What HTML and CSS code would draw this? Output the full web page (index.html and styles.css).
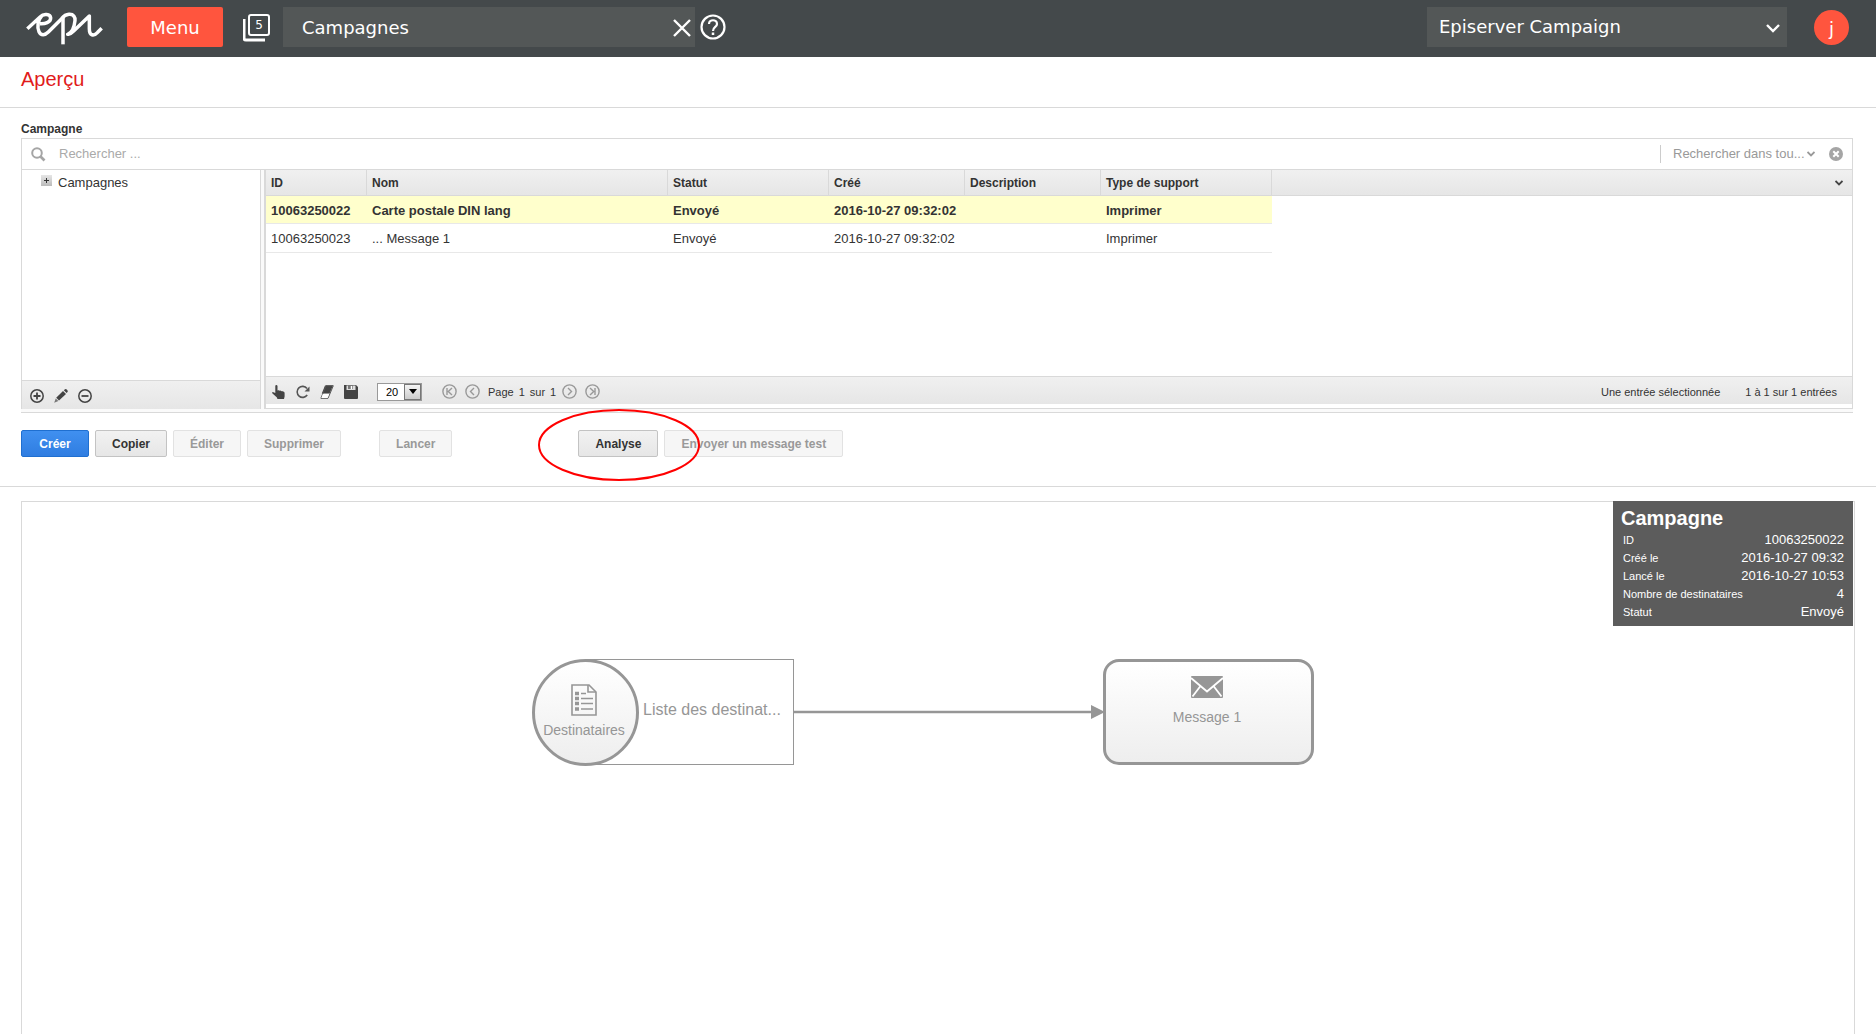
FILE: index.html
```html
<!DOCTYPE html>
<html lang="fr">
<head>
<meta charset="utf-8">
<meta name="viewport" content="width=device-width, initial-scale=1">
<title>Episerver Campaign – Campagnes</title>
<link rel="stylesheet" href="styles.css">
</head>
<body>
<header class="topbar">
  <a class="logo" href="#" aria-label="epi">
    <svg width="80" height="34" viewBox="0 0 240 102" fill="none" stroke="#fff" stroke-width="10.500" stroke-linejoin="round">
      <path d="M7 50L46 14C56 4 76 6 77 18C77 31 60 36 45 35M50 12C38 24 36 46 42 59C48 72 60 70 70 60L110 20C114 15 118 8 132 7C146 6 151 16 150 26C148 44 142 62 128 67H130C136 66 140 63 146 57L193 12V50C193 71 206 74 218 61L230 49"/>
      <path d="M114 97V18"/>
    </svg>
  </a>
  <button class="menu-btn" type="button">Menu</button>
  <button class="pages-btn" type="button" aria-label="Pages ouvertes">
    <svg width="28" height="28" viewBox="0 0 28 28" fill="none" stroke="#fff">
      <rect x="6" y="1" width="20" height="20" rx="2" stroke-width="2"/>
      <path d="M1 5V24Q1 26 3 26H22" stroke-width="3"/>
    </svg>
    <span class="pages-count">5</span>
  </button>
  <div class="tab">
    <span>Campagnes</span>
    <button class="tab-close" type="button" aria-label="Fermer">
      <svg width="18" height="18" viewBox="0 0 18 18" stroke="#fff" stroke-width="2.400"><path d="M1 1L17 17M17 1L1 17"/></svg>
    </button>
  </div>
  <button class="help" type="button" aria-label="Aide">
    <svg width="26" height="26" viewBox="0 0 26 26" fill="none" stroke="#fff"><circle cx="13" cy="13" r="11.500" stroke-width="2.200"/><path d="M9 10C9 5 17 5 17 10C17 13 13 13 13 17" stroke-width="2.200"/><path d="M13 18.500V21" stroke-width="2.500"/></svg>
  </button>
  <div class="product">
    <select aria-label="Produit"><option>Episerver Campaign</option></select>
    <svg width="14" height="9" viewBox="0 0 14 9" fill="none" stroke="#fff" stroke-width="2.400"><path d="M1 1L7 7L13 1"/></svg>
  </div>
  <button class="avatar" type="button" aria-label="Compte">j</button>
</header>

<h1 class="page-title">Aperçu</h1>

<main class="main">
  <section class="selector">
    <h2 class="selector-title">Campagne</h2>
    <div class="browser">
      <div class="search">
        <svg class="search-icon" width="15" height="15" viewBox="0 0 15 15" fill="none" stroke="#a5a5a5"><circle cx="6" cy="6" r="4.800" stroke-width="2"/><path d="M9.500 9.500L13.500 13.500" stroke-width="2.600"/></svg>
        <input type="text" aria-label="Rechercher" placeholder="Rechercher ...">
        <div class="scope">
          <select aria-label="Champ de recherche"><option>Rechercher dans tou...</option></select>
          <svg width="8" height="6" viewBox="0 0 8 6" fill="none" stroke="#999" stroke-width="1.800"><path d="M0.500 1L4 4.500L7.500 1"/></svg>
        </div>
        <button class="icon" type="button" aria-label="Effacer">
          <svg width="14" height="14" viewBox="0 0 14 14"><circle cx="7" cy="7" r="7" fill="#a5a5a5"/><path d="M4.300 4.300L9.700 9.700M9.700 4.300L4.300 9.700" stroke="#fff" stroke-width="2"/></svg>
        </button>
      </div>
      <div class="panes">
        <nav class="tree">
          <ul class="tree-list">
            <li><button class="expand" type="button" aria-label="Développer"><svg width="11" height="11" viewBox="0 0 11 11" stroke="#333"><path d="M3 5.500H8M5.500 3V8"/></svg></button><span>Campagnes</span></li>
          </ul>
          <div class="tree-tools">
            <button class="icon" type="button" aria-label="Ajouter"><svg width="14" height="14" viewBox="0 0 14 14" fill="none" stroke="#444" stroke-width="1.500"><circle cx="7" cy="7" r="6.200"/><path d="M3.500 7H10.500M7 3.500V10.500" stroke-width="1.800"/></svg></button>
            <button class="icon" type="button" aria-label="Modifier"><svg width="14" height="14" viewBox="0 0 14 14" fill="#444"><path d="M9.800 1.200L11 0.200Q12 -0.300 13 0.800Q14.200 2 13.500 3L12.600 4Z"/><path d="M9 2L12 4.900L5 11.500L2.200 8.700Z"/><path d="M1.700 9.400L4.400 12L0.200 13.700Z" fill="#777"/></svg></button>
            <button class="icon" type="button" aria-label="Retirer"><svg width="14" height="14" viewBox="0 0 14 14" fill="none" stroke="#444" stroke-width="1.500"><circle cx="7" cy="7" r="6.200"/><path d="M3.500 7H10.500" stroke-width="1.800"/></svg></button>
          </div>
        </nav>
        <div class="grid">
          <div class="grid-body">
            <table class="campaigns">
              <colgroup><col class="c-id"><col class="c-name"><col class="c-status"><col class="c-date"><col class="c-desc"><col class="c-type"><col></colgroup>
              <thead>
                <tr>
                  <th>ID</th><th>Nom</th><th>Statut</th><th>Créé</th><th>Description</th><th>Type de support</th>
                  <th class="more"><button class="icon" type="button" aria-label="Colonnes"><svg width="8" height="6" viewBox="0 0 8 6" fill="none" stroke="#444" stroke-width="1.800"><path d="M0.500 1L4 4.500L7.500 1"/></svg></button></th>
                </tr>
              </thead>
              <tbody>
                <tr class="selected"><td>10063250022</td><td>Carte postale DIN lang</td><td>Envoyé</td><td>2016-10-27 09:32:02</td><td></td><td>Imprimer</td><td class="rest"></td></tr>
                <tr><td>10063250023</td><td>... Message 1</td><td>Envoyé</td><td>2016-10-27 09:32:02</td><td></td><td>Imprimer</td><td class="rest"></td></tr>
              </tbody>
            </table>
          </div>
          <div class="grid-tools">
            <div class="tool-icons">
              <button class="icon" type="button" aria-label="Sélectionner"><svg width="14" height="14" viewBox="0 0 14 14" fill="#444"><path d="M3.300 1Q3.300 0 4.300 0T5.500 1V5.500L6.500 5.200Q7.300 5 7.600 5.800Q8.600 5.200 9.300 6.200Q10.300 5.700 11 6.500Q12.500 6.300 12.600 8V11.500L12 14H5.500L4.700 12.200L0.500 8.600Q-0.300 7.500 0.800 7.100L3.300 8Z"/></svg></button>
              <button class="icon" type="button" aria-label="Actualiser"><svg width="14" height="14" viewBox="0 0 14 14"><path d="M11 3.500A5.500 5.500 0 1 0 11.200 10" fill="none" stroke="#555" stroke-width="1.600"/><path d="M13.500 1.500V6.500H8.500Z" fill="#555"/></svg></button>
              <button class="icon" type="button" aria-label="Réinitialiser"><svg width="14" height="14" viewBox="0 0 14 14"><path d="M5 0.500H13L9.500 8.500H1.800Z" fill="#444"/><path d="M6 0.700H13.300L8 13.300H0.900Z" fill="none" stroke="#555"/><path d="M2.800 8.900H9.200L7.500 13H1.300Z" fill="#fff"/></svg></button>
              <button class="icon" type="button" aria-label="Enregistrer"><svg width="14" height="14" viewBox="0 0 14 14"><path d="M0 0H12L14 2V13Q14 14 13 14H1Q0 14 0 13Z" fill="#444"/><path d="M2.500 0.500H11.500V5H2.500Z" fill="#ddd"/><path d="M4 0H9V4H4Z" fill="#777"/><path d="M7.500 1V4" stroke="#fff" stroke-width="1.500"/></svg></button>
            </div>
            <div class="page-size">
              <select aria-label="Entrées par page"><option>20</option></select>
              <span class="page-size-arrow"><svg width="8" height="5" viewBox="0 0 8 5"><path d="M0 0H8L4 5Z"/></svg></span>
            </div>
            <div class="pager">
              <button class="icon" type="button" aria-label="Première page"><svg width="15" height="15" viewBox="0 0 15 15" fill="none" stroke="#999" stroke-width="1.400"><circle cx="7.500" cy="7.500" r="6.600"/><path d="M5 4V11M10 4L6.300 7.500L10 11"/></svg></button>
              <button class="icon" type="button" aria-label="Page précédente"><svg width="15" height="15" viewBox="0 0 15 15" fill="none" stroke="#999" stroke-width="1.400"><circle cx="7.500" cy="7.500" r="6.600"/><path d="M9 4L5.500 7.500L9 11"/></svg></button>
              <span class="page-text"><span>Page</span><span>1</span><span>sur</span><span>1</span></span>
              <button class="icon" type="button" aria-label="Page suivante"><svg width="15" height="15" viewBox="0 0 15 15" fill="none" stroke="#999" stroke-width="1.400"><circle cx="7.500" cy="7.500" r="6.600"/><path d="M6 4L9.500 7.500L6 11"/></svg></button>
              <button class="icon" type="button" aria-label="Dernière page"><svg width="15" height="15" viewBox="0 0 15 15" fill="none" stroke="#999" stroke-width="1.400"><circle cx="7.500" cy="7.500" r="6.600"/><path d="M10 4V11M5 4L8.700 7.500L5 11"/></svg></button>
            </div>
            <div class="counts"><span>Une entrée sélectionnée</span><span>1 à 1 sur 1 entrées</span></div>
          </div>
        </div>
      </div>
    </div>
  </section>

  <div class="actions">
    <div class="action-group">
      <button class="btn primary" type="button">Créer</button>
      <button class="btn" type="button">Copier</button>
      <button class="btn" type="button" disabled>Éditer</button>
      <button class="btn" type="button" disabled>Supprimer</button>
    </div>
    <div class="action-group launch">
      <button class="btn" type="button" disabled>Lancer</button>
    </div>
    <div class="action-group">
      <div class="highlighted">
        <button class="btn" type="button">Analyse</button>
        <svg class="ring" width="162" height="72" viewBox="0 0 162 72" fill="none" stroke="#f00" stroke-width="2"><ellipse cx="81" cy="36" rx="80" ry="35"/></svg>
      </div>
      <button class="btn" type="button" disabled>Envoyer un message test</button>
    </div>
  </div>

  <section class="canvas">
    <svg class="link" width="312" height="16" viewBox="0 0 312 16"><path d="M0 8H300" stroke="#969696" stroke-width="2.500"/><path d="M298 1L312 8L298 15Z" fill="#969696"/></svg>
    <div class="node list-node">
      <div class="node-circle">
        <svg width="26" height="32" viewBox="0 0 26 32" fill="none" stroke="#969696" stroke-width="1.600"><path d="M1 1H18L25 8V31H1Z"/><path d="M17 1V8H25"/><path d="M10 9.500H15M10 14.500H22M10 19.500H22M10 25H22"/><path d="M4 9.500H8M4 14.500H8M4 19.500H8M4 25H8" stroke-width="3.600"/></svg>
        <span>Destinataires</span>
      </div>
      <span class="node-name">Liste des destinat...</span>
    </div>
    <div class="node message-node">
      <svg width="32" height="22" viewBox="0 0 32 22"><rect width="32" height="22" rx="1" fill="#969696"/><path d="M0 2L16 15.500L32 2M1.500 20.500L9.500 10M30.500 20.500L22.500 10" fill="none" stroke="#fff" stroke-width="1.800"/></svg>
      <span>Message 1</span>
    </div>
    <aside class="info">
      <h2>Campagne</h2>
      <dl>
        <div><dt>ID</dt><dd>10063250022</dd></div>
        <div><dt>Créé le</dt><dd>2016-10-27 09:32</dd></div>
        <div><dt>Lancé le</dt><dd>2016-10-27 10:53</dd></div>
        <div><dt>Nombre de destinataires</dt><dd>4</dd></div>
        <div><dt>Statut</dt><dd>Envoyé</dd></div>
      </dl>
    </aside>
  </section>
</main>
</body>
</html>
```

FILE: styles.css
```css
* { box-sizing: border-box; }

body {
  margin: 0;
  min-height: 100vh;
  display: flex;
  flex-direction: column;
  background: #fff;
  color: #333;
  font: 13px/16px "Liberation Sans", Arial, sans-serif;
}

button, input, select { font: inherit; color: inherit; }
button { cursor: pointer; padding: 0; }
svg { display: block; flex: none; }
select { appearance: none; border: 0; background: none; padding: 0; }

.icon { border: 0; background: none; flex: none; }

/* Top bar */
.topbar {
  display: flex;
  align-items: flex-start;
  height: 57px;
  padding: 7px 27px 0 25px;
  background: #44494b;
  color: #fff;
  font: 18px/24px "DejaVu Sans", Verdana, sans-serif;
}
.logo { margin: 5px 22px 0 0; }
.menu-btn {
  width: 96px;
  height: 40px;
  padding-top: 2px;
  border: 0;
  border-radius: 2px;
  background: #ff553e;
}
.pages-btn {
  position: relative;
  margin: 7px 12px 0 20px;
  border: 0;
  background: none;
}
.pages-count {
  position: absolute;
  left: 6px;
  top: 1px;
  width: 20px;
  text-align: center;
  font-size: 12px;
  line-height: 20px;
}
.tab {
  display: flex;
  align-items: center;
  justify-content: space-between;
  flex: 0 1 412px;
  height: 40px;
  padding: 2px 4px 0 19px;
  background: #535757;
}
.tab-close { border: 0; background: none; }
.help { margin: 7px 0 0 5px; border: 0; background: none; }
.product {
  position: relative;
  display: flex;
  align-items: center;
  flex: 0 1 360px;
  height: 40px;
  margin: 0 27px 0 auto;
  padding: 2px 7px 0 0;
  background: #535757;
}
.product select { flex: 1; height: 38px; padding: 0 0 2px 12px; }
.avatar {
  width: 35px;
  height: 35px;
  margin-top: 3px;
  padding-top: 2px;
  border: 0;
  border-radius: 50%;
  background: #ff553e;
}

/* Page title */
.page-title {
  margin: 0;
  padding: 10px 21px 16px;
  border-bottom: 1px solid #d9d9d9;
  color: #e11b1b;
  font-size: 20px;
  font-weight: normal;
  line-height: 24px;
}

.main { flex: 1; display: flex; flex-direction: column; }

/* Campaign browser */
.selector { padding: 13px 23px 0 21px; }
.selector-title { margin: 0; font-size: 12px; line-height: 17px; }
.browser {
  border: 1px solid #d9d9d9;
  border-width: 1px 0;
}
.search {
  display: flex;
  align-items: center;
  height: 31px;
  padding: 0 9px;
  border: solid #d9d9d9;
  border-width: 0 1px 1px;
  color: #999;
}
.search input {
  flex: 1;
  min-width: 0;
  margin-left: 13px;
  padding: 0;
  border: 0;
  outline: 0;
}
.search input::placeholder { color: #aaa; }
.scope {
  display: flex;
  align-items: center;
  gap: 2px;
  height: 18px;
  margin-right: 14px;
  padding-left: 12px;
  border-left: 1px solid #ccc;
}
.panes { display: flex; height: 242px; padding-bottom: 3px; background: #fafafa; }
.tree {
  display: flex;
  flex-direction: column;
  flex: none;
  width: 240px;
  border: solid #d9d9d9;
  border-width: 0 1px;
  background: #fff;
}
.tree-list { flex: 1; margin: 0; padding: 5px 0 0 19px; list-style: none; }
.tree-list li { display: flex; gap: 6px; align-items: flex-start; }
.expand { border: 0; background: linear-gradient(#e6e6e6, #bbb); }
.tree-tools {
  display: flex;
  gap: 10px;
  height: 29px;
  padding: 8px 8px 0;
  border-top: 1px solid #d9d9d9;
  background: linear-gradient(#f0f0f0, #e6e6e6);
}
.tree-tools .icon { height: 14px; }
.grid {
  display: flex;
  flex-direction: column;
  flex: 1;
  min-width: 0;
  margin-left: 3px;
  padding-bottom: 4px;
  border: solid #d9d9d9;
  border-width: 0 1px 1px 2px;
  background: #fff;
}
.grid-body { flex: 1; min-height: 0; overflow: hidden; }
.campaigns { width: 100%; table-layout: fixed; border-collapse: separate; border-spacing: 0; }
.c-id { width: 101px; }
.c-name { width: 301px; }
.c-status { width: 161px; }
.c-date, .c-desc { width: 136px; }
.c-type { width: 171px; }
.campaigns th {
  height: 26px;
  padding: 0 5px;
  border: solid #d9d9d9;
  border-width: 0 1px 1px 0;
  background: linear-gradient(#f0f0f0, #e6e6e6);
  font-size: 12px;
  text-align: left;
}
.campaigns .more { border-right: 0; padding-right: 9px; }
.more .icon { display: block; margin-left: auto; }
.campaigns td {
  height: 29px;
  padding: 2px 5px 0;
  border-bottom: 1px solid #e8e8e8;
  white-space: nowrap;
}
.campaigns .selected td { height: 28px; background: #ffffcc; font-weight: bold; }
.campaigns .rest, .campaigns .selected .rest { border: 0; background: none; }
.grid-tools {
  display: flex;
  align-items: center;
  height: 28px;
  padding: 2px 15px 0 6px;
  border-top: 1px solid #d9d9d9;
  background: linear-gradient(#f0f0f0, #e6e6e6);
  font-size: 11px;
}
.tool-icons { display: flex; gap: 10px; }
.page-size {
  display: flex;
  width: 45px;
  height: 18px;
  margin: 0 20px 0 19px;
  border: 1px solid #999;
  background: #fff;
  color: #000;
}
.page-size select { flex: 1; min-width: 0; padding-left: 8px; }
.page-size-arrow {
  display: grid;
  place-items: center;
  width: 17px;
  border: 1px solid #777;
  background: linear-gradient(#f4f4f4, #ccc);
}
.pager { display: flex; align-items: center; gap: 8px; }
.page-text { display: flex; gap: 5px; margin-right: -2px; }
.counts { display: flex; gap: 25px; margin-left: auto; }

/* Action buttons */
.actions {
  display: flex;
  padding: 17px 21px 29px;
  border-bottom: 1px solid #d9d9d9;
}
.action-group { display: flex; gap: 6px; }
.launch { margin: 0 126px 0 38px; }
.btn {
  min-width: 68px;
  height: 27px;
  padding: 0 16px;
  border: 1px solid #c3c3c3;
  border-radius: 2px;
  background: linear-gradient(#f2f2f2, #e6e6e6);
  font-size: 12px;
  font-weight: bold;
  white-space: nowrap;
}
.btn:disabled { border-color: #e2e2e2; background: #f6f6f6; color: #999; }
.btn.primary { border-color: #1f6fd0; background: linear-gradient(#4090f0, #2f7de1); color: #fff; }
.highlighted { position: relative; }
.ring { position: absolute; left: -40px; top: -21px; pointer-events: none; }

/* Diagram */
.canvas {
  position: relative;
  flex: 1;
  min-height: 300px;
  margin: 14px 21px 0;
  border: 1px solid #d9d9d9;
  border-bottom: 0;
  color: #969696;
}
.node { position: absolute; top: 157px; height: 106px; font-size: 14px; }
.list-node {
  left: 510px;
  display: flex;
  align-items: flex-start;
  width: 262px;
}
.list-node::before {
  content: "";
  position: absolute;
  inset: 0 0 0 53px;
  border: 1px solid #969696;
}
.node-circle {
  position: relative;
  display: flex;
  flex-direction: column;
  align-items: center;
  flex: none;
  width: 107px;
  height: 107px;
  padding: 22px 3px 0 0;
  gap: 6px;
  border: 3px solid #969696;
  border-radius: 50%;
  background: linear-gradient(#fff, #eee);
}
.node-name { margin: 43px 0 0 4px; font-size: 16px; white-space: nowrap; }
.message-node {
  left: 1081px;
  display: flex;
  flex-direction: column;
  align-items: center;
  width: 211px;
  padding: 14px 3px 0 0;
  gap: 11px;
  border: 3px solid #969696;
  border-radius: 16px;
  background: linear-gradient(#fff, #eee);
}
.link { position: absolute; left: 771px; top: 202px; }
.info {
  position: absolute;
  top: -1px;
  right: 1px;
  width: 240px;
  padding: 5px 9px 5px 8px;
  background: #5c5c5c;
  color: #fff;
}
.info h2 { margin: 0; font-size: 20px; line-height: 25px; }
.info dl { margin: 0; }
.info dl div { display: flex; justify-content: space-between; padding-left: 2px; line-height: 18px; }
.info dt { font-size: 11px; }
.info dd { margin: 0; }
```
